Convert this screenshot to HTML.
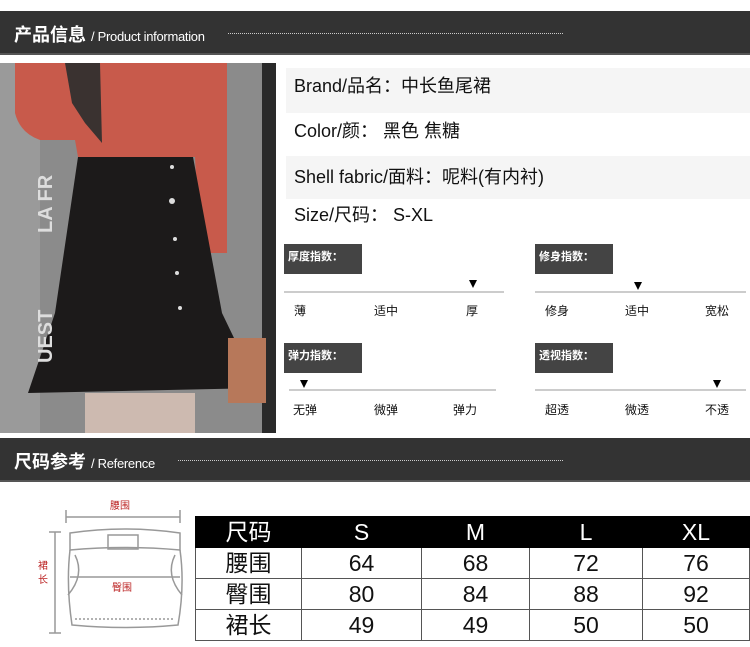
<!DOCTYPE html>
<html><head><meta charset="utf-8"><style>
*{margin:0;padding:0;box-sizing:border-box}
body{width:750px;height:647px;background:#fff;position:relative;overflow:hidden;font-family:"Liberation Sans","Noto Sans CJK SC",sans-serif;color:#111}
.abs{position:absolute}
.hdr{position:absolute;left:0;width:750px;height:44px;background:#333;border-bottom:2px solid #555}
.hdr .t{position:absolute;left:14px;top:10px;color:#fff;font-size:18px;font-weight:bold;white-space:nowrap}
.hdr .t span{font-size:13px;font-weight:normal;letter-spacing:-0.3px}
.hdr .d{position:absolute;top:22px;border-top:1px dotted #ccc;right:187px}
.row{position:absolute;left:286px;width:464px;font-size:18px;padding-left:8px;white-space:nowrap}
.box{position:absolute;width:78px;height:30px;background:#444;color:#fff;font-size:11px;font-weight:bold;padding:4px 0 0 4px}
.ln{position:absolute;height:2px;background:#ccc}
.lb{position:absolute;font-size:12px}
.tri{position:absolute;width:0;height:0;border-left:4px solid transparent;border-right:4px solid transparent;border-top:8px solid #000}
table{position:absolute;left:195px;top:516px;width:555px;border-collapse:collapse;font-size:23px}
td{text-align:center;border:1px solid #555;height:31px;line-height:28px;padding:0}
tr.h td{background:#000;color:#fff;border-color:#000;height:31px}
</style></head><body>
<div class="hdr" style="top:11px"><div class="t">产品信息 <span>/ Product information</span></div><div class="d" style="left:228px"></div></div>

<svg class="abs" style="left:0;top:63px" width="276" height="370">
<rect width="276" height="370" fill="#8b8b8b"/>
<rect x="0" y="0" width="40" height="370" fill="#9a9a9a"/>
<rect x="262" y="0" width="14" height="370" fill="#2a2a2a"/>
<path d="M15 0 H227 V190 H200 L195 94 H78 L75 77 L40 77 Q20 70 15 50 Z" fill="#c85a4b"/>
<path d="M65 0 H100 L102 80 L85 60 L72 40 Z" fill="#3a3230"/>
<path d="M85 330 H195 V370 H85 Z" fill="#cdbab0"/>
<path d="M78 94 H193 L222 250 L258 325 L28 330 L55 250 Z" fill="#1c1a1a"/>
<path d="M228 275 h38 v65 h-38 z" fill="#b7785a"/>
<g fill="#ddd"><circle cx="172" cy="104" r="2"/><circle cx="172" cy="138" r="3"/><circle cx="175" cy="176" r="2"/><circle cx="177" cy="210" r="2"/><circle cx="180" cy="245" r="2"/></g>
<text x="52" y="170" fill="#ddd" font-size="20" font-weight="bold" transform="rotate(-90 52 170)" font-family="Liberation Sans">LA FR</text>
<text x="52" y="300" fill="#ddd" font-size="20" font-weight="bold" transform="rotate(-90 52 300)" font-family="Liberation Sans">UEST</text>
</svg>

<div class="row" style="top:68px;height:45px;background:#f5f5f5;line-height:36px">Brand/品名：中长鱼尾裙</div>
<div class="row" style="top:113px;height:43px;line-height:36px">Color/颜： 黑色 焦糖</div>
<div class="row" style="top:156px;height:43px;background:#f5f5f5;line-height:43px">Shell fabric/面料：呢料(有内衬)</div>
<div class="row" style="top:199px;height:36px;line-height:32px">Size/尺码： S-XL</div>

<div class="box" style="left:284px;top:244px">厚度指数：</div>
<div class="ln" style="left:284px;top:291px;width:220px"></div>
<div class="tri" style="left:469px;top:280px"></div>
<div class="lb" style="left:294px;top:302px">薄</div><div class="lb" style="left:374px;top:302px">适中</div><div class="lb" style="left:466px;top:302px">厚</div>

<div class="box" style="left:535px;top:244px">修身指数：</div>
<div class="ln" style="left:535px;top:291px;width:211px"></div>
<div class="tri" style="left:634px;top:282px"></div>
<div class="lb" style="left:545px;top:302px">修身</div><div class="lb" style="left:625px;top:302px">适中</div><div class="lb" style="left:705px;top:302px">宽松</div>

<div class="box" style="left:284px;top:343px">弹力指数：</div>
<div class="ln" style="left:289px;top:389px;width:207px"></div>
<div class="tri" style="left:300px;top:380px"></div>
<div class="lb" style="left:293px;top:401px">无弹</div><div class="lb" style="left:374px;top:401px">微弹</div><div class="lb" style="left:453px;top:401px">弹力</div>

<div class="box" style="left:535px;top:343px">透视指数：</div>
<div class="ln" style="left:535px;top:389px;width:211px"></div>
<div class="tri" style="left:713px;top:380px"></div>
<div class="lb" style="left:545px;top:401px">超透</div><div class="lb" style="left:625px;top:401px">微透</div><div class="lb" style="left:705px;top:401px">不透</div>

<div class="hdr" style="top:438px"><div class="t">尺码参考 <span>/ Reference</span></div><div class="d" style="left:178px"></div></div>

<svg class="abs" style="left:30px;top:495px" width="165" height="145">
<g stroke="#999" fill="none" stroke-width="1.5">
<line x1="36" y1="22" x2="150" y2="22"/><line x1="36" y1="15" x2="36" y2="28"/><line x1="150" y1="15" x2="150" y2="28"/>
<line x1="25" y1="37" x2="25" y2="138"/><line x1="19" y1="37" x2="31" y2="37"/><line x1="19" y1="138" x2="31" y2="138"/>
<path d="M40 38 Q95 30 150 38 L150 55 Q95 50 40 55 Z"/>
<rect x="78" y="40" width="30" height="14"/>
<path d="M40 55 Q36 90 42 130 Q95 135 148 130 Q155 90 150 55"/>
<path d="M45 60 Q55 80 38 100"/><path d="M145 60 Q135 80 152 100"/>
<line x1="40" y1="82" x2="150" y2="82"/>
<path d="M45 124 H145" stroke-dasharray="2 2"/>
</g>
<text x="80" y="14" fill="#b22" font-size="10" font-family="Noto Sans CJK SC">腰围</text>
<text x="82" y="96" fill="#b22" font-size="10" font-family="Noto Sans CJK SC">臀围</text>
<text x="8" y="74" fill="#b22" font-size="10" font-family="Noto Sans CJK SC">裙</text>
<text x="8" y="88" fill="#b22" font-size="10" font-family="Noto Sans CJK SC">长</text>
</svg>

<table>
<colgroup><col style="width:106px"><col style="width:120px"><col style="width:108px"><col style="width:113px"><col></colgroup>
<tr class="h"><td>尺码</td><td>S</td><td>M</td><td>L</td><td>XL</td></tr>
<tr><td>腰围</td><td>64</td><td>68</td><td>72</td><td>76</td></tr>
<tr><td>臀围</td><td>80</td><td>84</td><td>88</td><td>92</td></tr>
<tr><td>裙长</td><td>49</td><td>49</td><td>50</td><td>50</td></tr>
</table>
</body></html>
